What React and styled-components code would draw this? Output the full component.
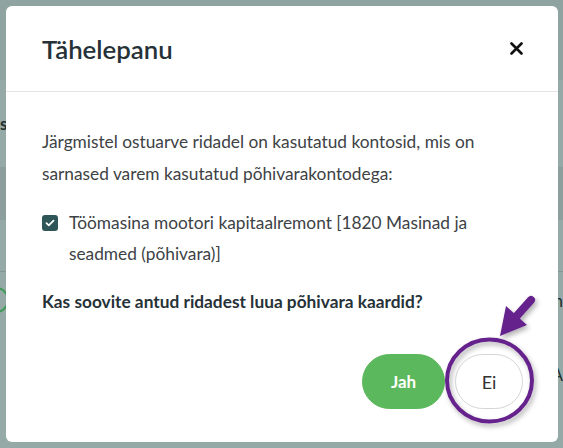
import React from "react";
import styled, { createGlobalStyle } from "styled-components";

const Global = createGlobalStyle`
  html, body { margin: 0; padding: 0; }
  body { font-family: "Lato", "Noto Sans", sans-serif; overflow: hidden; }
`;

const Page = styled.div`
  position: relative;
  width: 563px;
  height: 448px;
  overflow: hidden;
  background: #95a9a6;
  display: grid;
  grid-template-rows: 80px 87px 53px 52px 56px 92px 1fr;
`;

const TopBar = styled.div`
  background: #8fa3a0;
`;

const BgRow = styled.div`
  display: flex;
  align-items: center;
  justify-content: space-between;
  background: ${(p) => p.$bg || "transparent"};
  border-bottom: ${(p) => (p.$line ? "1px solid #83968f" : "none")};
  color: #1e2a2a;
  font-size: 17px;
`;

const BgText = styled.span`
  font-weight: ${(p) => (p.$bold ? 700 : 400)};
  color: #22302f;
`;

const BgCircle = styled.span`
  width: 22px;
  height: 22px;
  margin-left: -17px;
  border: 2px solid #3e9a54;
  border-radius: 50%;
`;

const Modal = styled.div`
  position: absolute;
  top: 6px;
  left: 6px;
  width: 552px;
  height: 436px;
  background: #fff;
  border-radius: 6px;
  display: flex;
  flex-direction: column;
`;

const Header = styled.div`
  height: 86px;
  box-sizing: border-box;
  border-bottom: 1px solid #e2e4e5;
  display: flex;
  align-items: center;
  justify-content: space-between;
  padding: 0 34px 0 36px;
`;

const Title = styled.h2`
  margin: 0;
  font-size: 25.8px;
  font-weight: 600;
  color: #263238;
`;

const CloseButton = styled.button`
  border: 0;
  background: none;
  padding: 0;
  width: 16px;
  height: 16px;
  display: flex;
  align-items: center;
  justify-content: center;
  cursor: pointer;
`;

const Body = styled.div`
  flex: 1;
  display: flex;
  flex-direction: column;
  padding: 34px 35px 33px 36px;
  font-size: 17.3px;
  line-height: 32px;
  color: #3d4245;
`;

const Paragraph = styled.p`
  margin: 0 0 17px;
`;

const CheckRow = styled.label`
  display: flex;
  align-items: flex-start;
  gap: 11px;
  padding-right: 24px;
  line-height: 31px;
`;

const Box = styled.span`
  flex: none;
  width: 16px;
  height: 16px;
  margin-top: 8px;
  border-radius: 3px;
  background: #2e5558;
  display: flex;
  align-items: center;
  justify-content: center;
`;

const Question = styled.p`
  margin: 17px 0 0;
  font-weight: 700;
  color: #263238;
`;

const Actions = styled.div`
  margin-top: auto;
  display: flex;
  justify-content: flex-end;
  gap: 10px;
`;

const Button = styled.button`
  height: 55px;
  padding: 0 ${(p) => (p.$primary ? "27px" : "24px")};
  border-radius: 28px;
  font-family: inherit;
  font-size: ${(p) => (p.$primary ? "17px" : "18px")};
  font-weight: ${(p) => (p.$primary ? 700 : 400)};
  color: ${(p) => (p.$primary ? "#fff" : "#333")};
  background: ${(p) => (p.$primary ? "#5cb85c" : "#fff")};
  border: 1px solid ${(p) => (p.$primary ? "#5cb85c" : "#d3d6d8")};
  min-width: ${(p) => (p.$primary ? "83px" : "68px")};
`;

const Annotation = styled.svg`
  position: absolute;
  left: 0;
  top: 0;
  pointer-events: none;
`;

export default function App() {
  return (
    <>
      <Global />
      <Page>
        <TopBar />
        <BgRow>
          <BgText $bold>s</BgText>
        </BgRow>
        <BgRow $bg="#8c9f9c" />
        <BgRow $line />
        <BgRow>
          <BgCircle />
          <BgText>n</BgText>
        </BgRow>
        <BgRow>
          <span />
          <BgText>A</BgText>
        </BgRow>
        <BgRow />

        <Modal>
          <Header>
            <Title>Tähelepanu</Title>
            <CloseButton aria-label="Sulge">
              <svg width="13" height="13" viewBox="0 0 13 13">
                <path d="M1.5 1.5 L11.5 11.5 M11.5 1.5 L1.5 11.5" stroke="#111" strokeWidth="2.6" strokeLinecap="round" />
              </svg>
            </CloseButton>
          </Header>
          <Body>
            <Paragraph>
              Järgmistel ostuarve ridadel on kasutatud kontosid, mis on sarnased varem kasutatud põhivarakontodega:
            </Paragraph>
            <CheckRow>
              <Box>
                <svg width="10" height="8" viewBox="0 0 10 8">
                  <path d="M1.5 4.2 L3.8 6.3 L8.5 1.7" fill="none" stroke="#fff" strokeWidth="1.8" strokeLinecap="round" strokeLinejoin="round" />
                </svg>
              </Box>
              <span>Töömasina mootori kapitaalremont [1820 Masinad ja seadmed (põhivara)]</span>
            </CheckRow>
            <Question>Kas soovite antud ridadest luua põhivara kaardid?</Question>
            <Actions>
              <Button $primary>Jah</Button>
              <Button>Ei</Button>
            </Actions>
          </Body>
        </Modal>

        <Annotation width="563" height="448" viewBox="0 0 563 448">
          <defs>
            <filter id="sh" x="-20%" y="-20%" width="150%" height="150%">
              <feDropShadow dx="2" dy="3" stdDeviation="2.5" floodColor="#000" floodOpacity="0.3" />
            </filter>
          </defs>
          <g filter="url(#sh)">
            <ellipse cx="489.5" cy="380.5" rx="42.5" ry="41" fill="none" stroke="#66248c" strokeWidth="4" />
            <path d="M531 300 L514 319" stroke="#66248c" strokeWidth="8" strokeLinecap="round" />
            <path d="M500 336 L506 306 L527 325 Z" fill="#66248c" />
          </g>
        </Annotation>
      </Page>
    </>
  );
}
